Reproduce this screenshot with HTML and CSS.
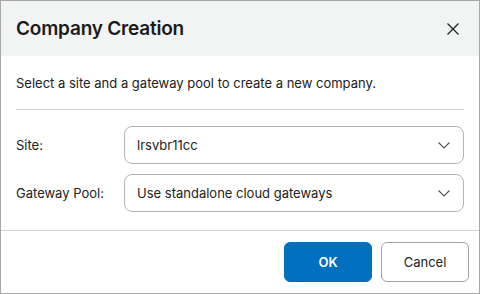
FILE: index.html
```html
<!DOCTYPE html>
<html lang="en">
<head>
    <meta charset="UTF-8">
    <meta name="viewport" content="width=device-width, initial-scale=1.0">
    <title>Company Creation</title>
    <link rel="stylesheet" href="styles.css">
</head>
<body>
    <div class="dialog">
        <div class="dialog-header">
            <h1>Company Creation</h1>
            <button class="close" aria-label="Close">
                <svg width="12" height="12" viewBox="0 0 12 12"><path d="M0.5 0.5 L11.5 11.5 M11.5 0.5 L0.5 11.5" stroke="#222" stroke-width="1.3" fill="none"/></svg>
            </button>
        </div>
        <div class="dialog-body">
            <p class="intro">Select a site and a gateway pool to create a new company.</p>
            <hr class="sep">
            <div class="form">
                <label>Site:</label>
                <div class="select">
                    <span>lrsvbr11cc</span>
                    <svg width="12" height="7" viewBox="0 0 12 7"><path d="M0.5 0.5 L6 6 L11.5 0.5" stroke="#555" stroke-width="1.2" fill="none"/></svg>
                </div>
                <label>Gateway Pool:</label>
                <div class="select">
                    <span>Use standalone cloud gateways</span>
                    <svg width="12" height="7" viewBox="0 0 12 7"><path d="M0.5 0.5 L6 6 L11.5 0.5" stroke="#555" stroke-width="1.2" fill="none"/></svg>
                </div>
            </div>
        </div>
        <div class="dialog-footer">
            <button class="btn primary">OK</button>
            <button class="btn">Cancel</button>
        </div>
    </div>
</body>
</html>
```

FILE: styles.css
```css
* {
    margin: 0;
    padding: 0;
    box-sizing: border-box;
}

body {
    font-family: Inter, "Liberation Sans", sans-serif;
    color: #222;
    background: #fff;
}

.dialog {
    width: 480px;
    height: 294px;
    border: 1px solid #a8a8a8;
    display: flex;
    flex-direction: column;
}

.dialog-header {
    height: 55px;
    background-color: #f2f3f3;
    display: flex;
    align-items: center;
    justify-content: space-between;
    padding: 0 20px 0 15px;
}

h1 {
    font-size: 19px;
    font-weight: 600;
    color: #1b1b1b;
    letter-spacing: -0.2px;
}

.close {
    background: none;
    border: none;
    width: 12px;
    height: 12px;
    display: flex;
    cursor: pointer;
}

.dialog-body {
    padding: 17px 15px 18px;
}

.intro {
    font-size: 13px;
    line-height: 20px;
}

.sep {
    border: none;
    border-top: 1px solid #d4d4d4;
    margin: 16px 0;
}

.form {
    display: grid;
    grid-template-columns: 108px 1fr;
    row-gap: 10px;
    align-items: center;
}

label {
    font-size: 13px;
}

.select {
    height: 38px;
    border: 1px solid #b4b4b4;
    border-radius: 8px;
    display: flex;
    align-items: center;
    justify-content: space-between;
    padding: 0 13px 0 12px;
    font-size: 13px;
}

.dialog-footer {
    border-top: 1px solid #d4d4d4;
    padding: 11px 10px 11px;
    display: flex;
    justify-content: flex-end;
    gap: 9px;
}

.btn {
    width: 88px;
    height: 40px;
    border: 1px solid #a0a0a0;
    border-radius: 6px;
    background: #fff;
    color: #222;
    font-family: Inter, "Liberation Sans", sans-serif;
    font-size: 13px;
    cursor: pointer;
}

.btn.primary {
    background-color: #0070bf;
    border-color: #0070bf;
    color: #fff;
    font-weight: 600;
}
```
